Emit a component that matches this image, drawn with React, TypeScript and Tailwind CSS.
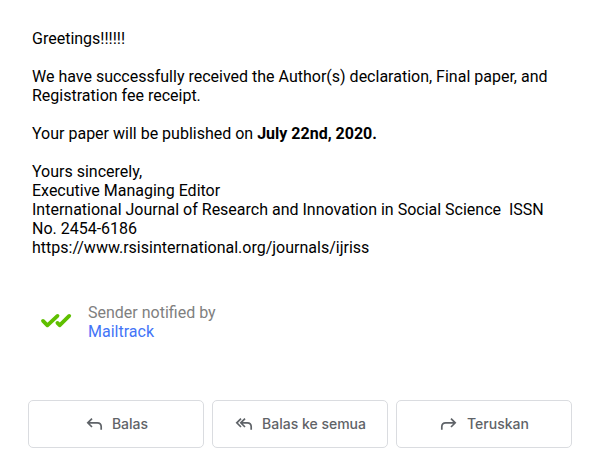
import type { ReactNode } from "react";

const ReplyIcon = () => (
	<svg
		viewBox="0 0 20 20"
		className="size-5 shrink-0"
		fill="none"
		stroke="currentColor"
		strokeWidth="1.7"
		aria-hidden="true"
	>
		<path d="M8 4.6 3.8 8.8 8 13M4 8.8h9.2q4 0 4 4v3" />
	</svg>
);

const ReplyAllIcon = () => (
	<svg
		viewBox="0 0 20 20"
		className="size-5 shrink-0"
		fill="none"
		stroke="currentColor"
		strokeWidth="1.7"
		aria-hidden="true"
	>
		<path d="M7 4.6 2.8 8.8 7 13M11 4.6 6.8 8.8 11 13M7 8.8h6.2q4 0 4 4v3" />
	</svg>
);

const ForwardIcon = () => (
	<svg
		viewBox="0 0 20 20"
		className="size-5 shrink-0"
		fill="none"
		stroke="currentColor"
		strokeWidth="1.7"
		aria-hidden="true"
	>
		<path d="M12 4.6 16.2 8.8 12 13M16 8.8H6.8q-4 0-4 4v3" />
	</svg>
);

const DoubleCheckIcon = () => (
	<svg
		viewBox="0 0 32 20"
		className="w-8 h-5 shrink-0"
		fill="none"
		stroke="#5fbf00"
		strokeWidth="3.8"
		strokeLinecap="round"
		strokeLinejoin="round"
		aria-hidden="true"
	>
		<path d="M3 8.9 7.4 13.3 17.5 3.9M17.4 10.9 19.6 13.3 29.2 3.9" />
	</svg>
);

const ActionButton = ({ icon, label }: { icon: ReactNode; label: string }) => (
	<button
		type="button"
		className="flex flex-1 h-12 items-center justify-center gap-2 rounded-[5px] border border-[#dadce0] bg-white font-[Inter,sans-serif] text-sm font-medium text-[#5f6368]"
	>
		{icon}
		<span>{label}</span>
	</button>
);

export default function App() {
	return (
		<main className="bg-white px-7 pt-[29px] pb-4 font-[Roboto,sans-serif] text-base/[19px] text-black">
			<article className="flex flex-col gap-[19px] px-1">
				<p>Greetings!!!!!!</p>
				<p>
					We have successfully received the Author(s) declaration, Final paper, and
					Registration fee receipt.
				</p>
				<p>
					Your paper will be published on <strong>July 22nd, 2020.</strong>
				</p>
				<p>
					Yours sincerely,
					<br />
					Executive Managing Editor
					<br />
					International Journal of Research and Innovation in Social Science&nbsp; ISSN
					No. 2454-6186
					<br />
					https://www.rsisinternational.org/journals/ijriss
				</p>
			</article>

			<section className="mt-[46px] flex items-center gap-4 pl-3">
				<DoubleCheckIcon />
				<p className="text-[#808080]">
					Sender notified by
					<br />
					<a
						href="https://mailtrack.io"
						className="text-[#4374f7]"
					>
						Mailtrack
					</a>
				</p>
			</section>

			<footer className="mt-[59px] flex gap-2">
				<ActionButton
					icon={<ReplyIcon />}
					label="Balas"
				/>
				<ActionButton
					icon={<ReplyAllIcon />}
					label="Balas ke semua"
				/>
				<ActionButton
					icon={<ForwardIcon />}
					label="Teruskan"
				/>
			</footer>
		</main>
	);
}
